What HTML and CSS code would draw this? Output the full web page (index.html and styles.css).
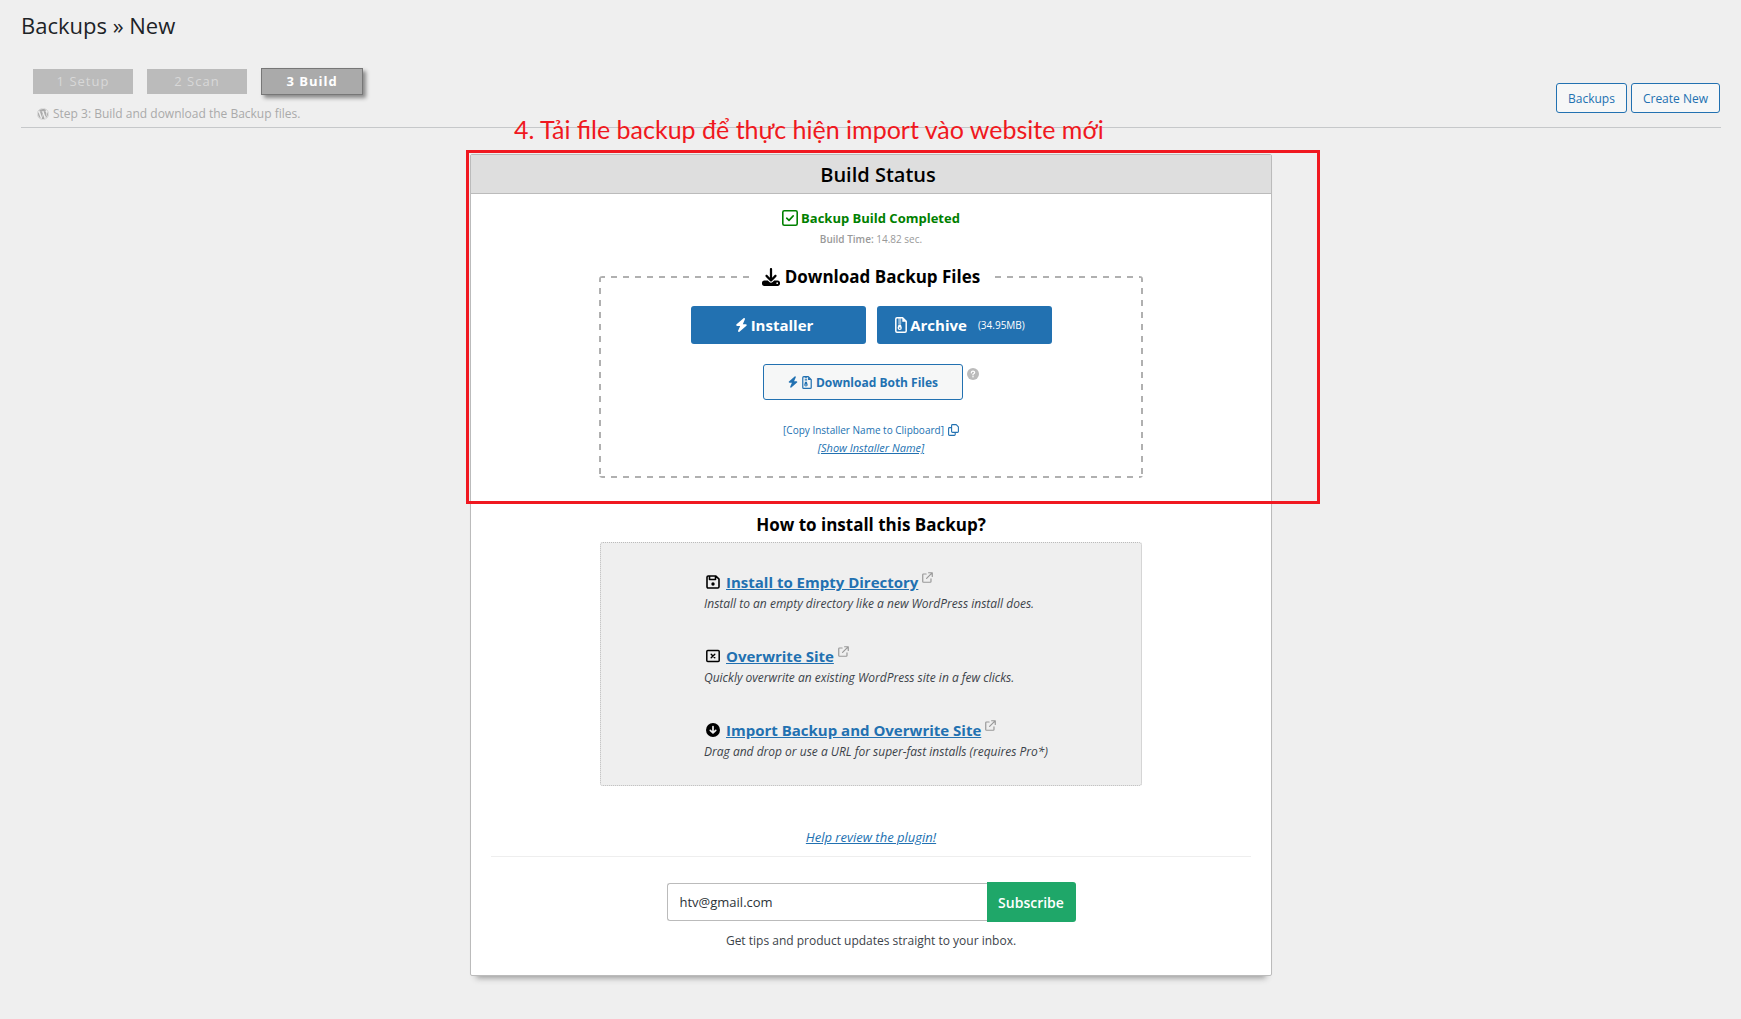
FILE: index.html
```
<!DOCTYPE html>
<html lang="en">
<head>
<meta charset="utf-8">
<meta name="viewport" content="width=device-width, initial-scale=1">
<title>Backups » New</title>
<link rel="stylesheet" href="styles.css">
</head>
<body>
<svg class="sprite" aria-hidden="true">
  <symbol id="bolt" viewBox="0 0 448 512"><path fill="currentColor" d="M349.4 44.6c5.9-13.7 1.5-29.7-10.6-38.5s-28.6-8-39.9 1.8l-256 224c-10 8.8-13.6 22.9-8.9 35.3S50.7 288 64 288H175.5L98.6 467.4c-5.9 13.7-1.5 29.7 10.6 38.5s28.6 8 39.9-1.8l256-224c10-8.8 13.6-22.9 8.9-35.3s-16.6-20.7-30-20.7H272.5L349.4 44.6z"/></symbol>
  <symbol id="zip" viewBox="0 0 12 16"><path fill="none" stroke="currentColor" stroke-width="1.5" stroke-linejoin="round" d="M2 .8h5.6l3.6 3.6V14q0 1.200-1.200 1.200H2Q.8 15.200.8 14V2Q.8.8 2 .8z"/><path fill="currentColor" d="M7.300.8v4h4zM3.200 1.500h3v1h-3zM3.200 3.500h3v1h-3zM3.200 5.500h3v1h-3zM3.500 7.500h2.400l.9 3.300q.2 2.200-2.100 2.200t-2.100-2.200zM4 10.500v1.200h1.400v-1.200z" fill-rule="evenodd"/></symbol>
  <symbol id="external" viewBox="0 0 12 12"><path fill="none" stroke="currentColor" stroke-width="1.300" stroke-linecap="round" stroke-linejoin="round" d="M4.500 2.200H1.700Q.8 2.200.8 3.100v7.200q0 .9.9.9h7.200q.9 0 .9-.9V7.500M7.200.8h4v4M11 1 5 7"/></symbol>
</svg>

<main class="page">
  <h1 class="page-title">Backups » New</h1>

  <header class="toolbar">
    <div class="progress">
      <ol class="steps">
        <li class="step">1 Setup</li>
        <li class="step">2 Scan</li>
        <li class="step step-active" aria-current="step">3 Build</li>
      </ol>
      <p class="step-note">
        <svg class="icon-12" viewBox="0 0 512 512" aria-hidden="true"><path fill="currentColor" d="M61.700 169.400l101.500 278C92.200 413 43.300 340.200 43.300 256c0-30.900 6.600-60.100 18.400-86.600zm337.900 75.900c0-26.300-9.400-44.500-17.500-58.700-10.800-17.500-20.900-32.400-20.900-49.900 0-19.600 14.800-37.800 35.700-37.800.9 0 1.800.1 2.800.2-37.900-34.700-88.300-55.900-143.700-55.900-74.300 0-139.700 38.100-177.800 95.900 5 .2 9.700.3 13.700.3 22.200 0 56.700-2.700 56.700-2.700 11.500-.7 12.800 16.200 1.400 17.500 0 0-11.500 1.300-24.300 2l77.500 230.400L249.800 247l-33.100-90.800c-11.500-.7-22.300-2-22.300-2-11.500-.7-10.100-18.200 1.300-17.500 0 0 35.100 2.700 56 2.700 22.200 0 56.700-2.700 56.700-2.700 11.500-.7 12.800 16.200 1.400 17.500 0 0-11.500 1.300-24.300 2l76.900 228.700 21.200-70.900c9-29.400 16-50.500 16-68.700zm-139.900 29.300l-63.800 185.500c19.100 5.600 39.200 8.700 60.100 8.700 24.800 0 48.500-4.300 70.600-12.100-.6-.9-1.100-1.900-1.500-2.900l-65.400-179.200zm183-120.700c.9 6.800 1.400 14 1.400 21.900 0 21.600-4 45.800-16.200 76.200l-65 187.900C426.200 403 468.700 334.500 468.700 256c0-37-9.400-71.800-26-102.100zM504 256c0 136.800-111.300 248-248 248C119.200 504 8 392.700 8 256 8 119.200 119.200 8 256 8c136.700 0 248 111.200 248 248zm-11.400 0c0-130.500-106.200-236.600-236.600-236.600C125.500 19.400 19.400 125.500 19.400 256S125.600 492.600 256 492.600c130.500 0 236.600-106.100 236.600-236.600z"/></svg>
        Step 3: Build and download the Backup files.
      </p>
    </div>
    <nav class="actions" aria-label="Backup pages">
      <button class="btn-outline" type="button">Backups</button>
      <button class="btn-outline" type="button">Create New</button>
    </nav>
  </header>

  <section class="card">
    <h2 class="card-title">Build Status</h2>

    <p class="status">
      <svg class="icon-16" viewBox="0 0 16 16" aria-hidden="true"><rect x=".8" y=".8" width="14.400" height="14.400" rx="1.500" fill="none" stroke="currentColor" stroke-width="1.600"/><path d="M4.700 8.200 7 10.400l4.200-4.500" fill="none" stroke="currentColor" stroke-width="1.600" stroke-linecap="round" stroke-linejoin="round"/></svg>
      Backup Build Completed
    </p>
    <p class="build-time"><b>Build Time:</b> 14.82 sec.</p>

    <fieldset class="downloads">
      <legend class="downloads-title">
        <svg class="icon-18" viewBox="0 0 512 512" aria-hidden="true"><path fill="currentColor" d="M288 32c0-17.700-14.300-32-32-32s-32 14.300-32 32V274.700l-73.400-73.400c-12.500-12.500-32.800-12.500-45.300 0s-12.500 32.800 0 45.300l128 128c12.500 12.500 32.800 12.500 45.300 0l128-128c12.500-12.500 12.500-32.800 0-45.300s-32.800-12.500-45.300 0L288 274.700V32zM64 352c-35.300 0-64 28.700-64 64v32c0 35.300 28.700 64 64 64H448c35.300 0 64-28.700 64-64V416c0-35.300-28.700-64-64-64H346.500l-45.300 45.300c-25 25-65.500 25-90.500 0L165.500 352H64zm368 56a24 24 0 1 1 0 48 24 24 0 1 1 0-48z"/></svg>
        Download Backup Files
      </legend>
      <div class="download-row">
        <button class="btn-primary" type="button"><svg class="icon-bolt" aria-hidden="true"><use href="#bolt"/></svg>Installer</button>
        <button class="btn-primary" type="button"><svg class="icon-zip" aria-hidden="true"><use href="#zip"/></svg>Archive<small class="size">(34.95MB)</small></button>
      </div>
      <div class="both-row">
        <button class="btn-both" type="button"><svg class="icon-bolt-small" aria-hidden="true"><use href="#bolt"/></svg><svg class="icon-zip-small" aria-hidden="true"><use href="#zip"/></svg>Download Both Files</button>
        <svg class="help" viewBox="0 0 12 12" role="img" aria-label="Help"><circle cx="6" cy="6" r="6" fill="currentColor"/><path d="M4.300 4.800Q4.400 3.200 6 3.200t1.700 1.400Q7.700 5.600 6 6.300v.6" fill="none" stroke="#fff" stroke-width="1.200" stroke-linecap="round"/><circle cx="6" cy="8.800" r=".8" fill="#fff"/></svg>
      </div>
      <a class="copy-link" href="#">[Copy Installer Name to Clipboard]
        <svg class="icon-copy" viewBox="0 0 11 12" aria-hidden="true"><path fill="none" stroke="currentColor" stroke-width="1.100" stroke-linejoin="round" d="M4.500.6h3.700l2.200 2.200v4.700q0 .9-.9.9h-5q-.9 0-.9-.9v-6q0-.9.9-.9zM3.600 3.600H1.500q-.9 0-.9.9v6q0 .9.9.9h4.800q.9 0 .9-.9V8.400"/></svg></a>
      <a class="show-link" href="#">[Show Installer Name]</a>
    </fieldset>

    <h3 class="install-title">How to install this Backup?</h3>
    <ul class="options">
      <li>
        <div class="option-head">
          <svg class="icon-14" viewBox="0 0 14 14" aria-hidden="true"><path fill="none" stroke="currentColor" stroke-width="1.600" stroke-linejoin="round" d="M2.200 1h7.700L13 4.100v7.700q0 1.200-1.200 1.200H2.200Q1 13 1 11.800V2.200Q1 1 2.200 1zM3.500 1.300v3.200h6V1.300"/><circle cx="7" cy="9" r="1.700" fill="currentColor"/></svg>
          <a class="option-link" href="#">Install to Empty Directory</a>
          <svg class="icon-external" aria-hidden="true"><use href="#external"/></svg>
        </div>
        <p class="option-note">Install to an empty directory like a new WordPress install does.</p>
      </li>
      <li>
        <div class="option-head">
          <svg class="icon-14" viewBox="0 0 14 14" aria-hidden="true"><rect x=".8" y="1.500" width="12.400" height="11" rx="1" fill="none" stroke="currentColor" stroke-width="1.500"/><path d="m5.200 5.200 3.600 3.600m0-3.600L5.200 8.800" stroke="currentColor" stroke-width="1.400" stroke-linecap="round"/></svg>
          <a class="option-link" href="#">Overwrite Site</a>
          <svg class="icon-external" aria-hidden="true"><use href="#external"/></svg>
        </div>
        <p class="option-note">Quickly overwrite an existing WordPress site in a few clicks.</p>
      </li>
      <li>
        <div class="option-head">
          <svg class="icon-14" viewBox="0 0 14 14" aria-hidden="true"><circle cx="7" cy="7" r="7" fill="currentColor"/><path d="M7 3.500v6.300M4.300 7.300 7 10l2.700-2.700" fill="none" stroke="#efefef" stroke-width="1.700" stroke-linecap="round" stroke-linejoin="round"/></svg>
          <a class="option-link" href="#">Import Backup and Overwrite Site</a>
          <svg class="icon-external" aria-hidden="true"><use href="#external"/></svg>
        </div>
        <p class="option-note">Drag and drop or use a URL for super-fast installs (requires Pro*)</p>
      </li>
    </ul>

    <a class="review" href="#">Help review the plugin!</a>

    <footer class="newsletter">
      <form class="subscribe">
        <input class="email" type="email" value="htv@gmail.com" aria-label="Email address">
        <button class="btn-subscribe" type="submit">Subscribe</button>
      </form>
      <p class="tips">Get tips and product updates straight to your inbox.</p>
    </footer>

    <div class="callout-box"></div>
    <p class="callout-text" lang="vi">4. Tải file backup để thực hiện import vào website mới</p>
  </section>
</main>
</body>
</html>
```
FILE: styles.css
```
* { box-sizing: border-box; }

body {
  margin: 0;
  background: #efefef;
  color: #3c434a;
  font: 12px/20px "Open Sans", "Noto Sans", sans-serif;
}

h1, h2, h3, p, ol, ul { margin: 0; padding: 0; list-style: none; }
a { color: #2271b1; }
svg { flex: none; }
button, input { font-family: inherit; }
.sprite { position: absolute; width: 0; height: 0; }

.page { padding: 9px 20px 40px 21px; }

.page-title {
  color: #1d2327;
  font-size: 22px;
  font-weight: 400;
  line-height: 32px;
}

/* Step progress and page actions */
.toolbar {
  display: flex;
  justify-content: space-between;
  align-items: flex-end;
  margin-top: 27px;
  padding-left: 12px;
  border-bottom: 1px solid #c6c8ca;
}
.steps { display: flex; align-items: center; gap: 14px; }
.step {
  width: 100px;
  background: #bbb;
  color: #d8d8d8;
  font-size: 13px;
  letter-spacing: 1px;
  line-height: 25px;
  text-align: center;
}
.step-active {
  width: 102px;
  border: 1px solid #777;
  background: #aaa;
  color: #fff;
  font-weight: 700;
  box-shadow: 3px 3px 4px #888;
}
.step-note {
  display: flex;
  align-items: center;
  gap: 4px;
  margin: 9px 0 3px;
  padding-left: 4px;
  color: #aaa;
}
.actions { display: flex; gap: 4px; margin: 0 1px 14px 0; }
.btn-outline {
  height: 30px;
  padding: 0 11px;
  border: 1px solid #2271b1;
  border-radius: 3px;
  background: #f6f7f7;
  color: #2271b1;
  font-size: 12px;
}

/* Build status card */
.card {
  position: relative;
  display: flex;
  flex-direction: column;
  align-items: center;
  width: 802px;
  max-width: 100%;
  margin: 26px auto 0;
  padding-bottom: 24px;
  border: 1px solid #bbb;
  border-radius: 2px;
  background: #fff;
  box-shadow: 0 8px 6px -6px #999;
}
.card-title {
  align-self: stretch;
  padding: 1px 0 0 14px;
  border-bottom: 1px solid #bbb;
  background: #dedede;
  color: #000;
  font-size: 20px;
  font-weight: 600;
  line-height: 37px;
  text-align: center;
}
.status {
  display: flex;
  align-items: center;
  gap: 3px;
  margin-top: 14px;
  color: #008000;
  font-size: 13px;
  font-weight: 700;
}
.build-time { color: #999; font-size: 10px; line-height: 22px; }
.build-time b { font-weight: 600; }

/* Long, widely spaced dashes along each edge, 6px on and 6px off */
.downloads {
  --dash-x: repeating-linear-gradient(90deg, #b0b0b0 0 6px, transparent 6px 12px);
  --dash-y: repeating-linear-gradient(#b0b0b0 0 6px, transparent 6px 12px);
  display: flex;
  flex-direction: column;
  align-items: center;
  width: 544px;
  max-width: 100%;
  margin: 15px 0 0;
  padding: 17px 0 19px;
  border: 2px solid transparent;
  border-radius: 3px;
  background:
    var(--dash-x) top / 100% 2px no-repeat border-box,
    var(--dash-x) bottom / 100% 2px no-repeat border-box,
    var(--dash-y) left / 2px 100% no-repeat border-box,
    var(--dash-y) right / 2px 100% no-repeat border-box;
}
.downloads-title {
  display: flex;
  align-items: center;
  gap: 5px;
  margin: 0 auto;
  padding: 0 11px;
  background: #fff;
  color: #000;
  font-size: 17px;
  font-weight: 700;
  line-height: 24px;
}
.download-row { display: flex; gap: 11px; }
.btn-primary {
  display: flex;
  justify-content: center;
  align-items: center;
  gap: 3px;
  width: 175px;
  height: 38px;
  padding: 0 8px 0 0;
  border: 0;
  border-radius: 3px;
  background: #2271b1;
  color: #fff;
  font-size: 15px;
  font-weight: 700;
}
.size { margin-left: 8px; font-size: 10px; font-weight: 400; }
.both-row { display: flex; gap: 4px; margin-top: 20px; }
.btn-both {
  display: flex;
  justify-content: center;
  align-items: center;
  gap: 4px;
  width: 200px;
  height: 36px;
  padding: 0;
  border: 1px solid #2271b1;
  border-radius: 3px;
  background: #f6f7f7;
  color: #2271b1;
  font-size: 12px;
  font-weight: 700;
}
.help { width: 12px; height: 12px; margin-top: 4px; color: #bbb; }
.copy-link {
  display: flex;
  align-items: center;
  gap: 4px;
  margin-top: 21px;
  font-size: 10px;
  line-height: 18px;
  text-decoration: none;
}
.show-link { font-size: 11px; font-style: italic; line-height: 18px; }

/* Install options */
.install-title {
  margin-top: 35px;
  color: #000;
  font-size: 17px;
  font-weight: 700;
  line-height: 24px;
}
.options {
  display: flex;
  flex-direction: column;
  gap: 30px;
  width: 542px;
  max-width: 100%;
  margin-top: 5px;
  padding: 27px 0 23px 103px;
  border: 1px dotted #bbb;
  border-radius: 3px;
  background: #efefef;
}
.option-head { display: flex; align-items: center; gap: 6px; padding-left: 2px; color: #000; }
.option-link { font-size: 15px; font-weight: 700; line-height: 24px; }
.option-note { font-style: italic; }

.review { margin-top: 41px; font-size: 13px; font-style: italic; }

/* Newsletter */
.newsletter {
  display: flex;
  flex-direction: column;
  align-items: center;
  align-self: stretch;
  margin: 9px 20px 0;
  padding-top: 25px;
  border-top: 1px solid #eee;
}
.subscribe { display: flex; align-items: center; }
.email {
  width: 320px;
  height: 38px;
  padding: 0 12px;
  border: 1px solid #bbb;
  border-right: 0;
  border-radius: 3px 0 0 3px;
  background: #fff;
  color: #2c3338;
  font-size: 13px;
}
.btn-subscribe {
  width: 89px;
  height: 40px;
  padding: 0;
  border: 0;
  border-radius: 0 3px 3px 0;
  background: #1fa769;
  color: #fff;
  font-size: 14px;
  font-weight: 600;
}
.tips { margin-top: 9px; }

/* Tutorial annotation laid over the page */
.callout-box {
  position: absolute;
  inset: -5px -49px auto -5px;
  height: 354px;
  border: 3px solid #f01820;
  pointer-events: none;
}
.callout-text {
  position: absolute;
  top: -42px;
  left: 43px;
  color: #f01820;
  font: 25px/32px Lato, "Noto Sans", sans-serif;
  white-space: nowrap;
}

/* Icon sizes */
.icon-12 { width: 12px; height: 12px; }
.icon-14 { width: 14px; height: 14px; }
.icon-16 { width: 16px; height: 16px; }
.icon-18 { width: 18px; height: 18px; }
.icon-bolt { width: 13px; height: 14px; }
.icon-bolt-small { width: 10px; height: 12px; }
.icon-zip { width: 12px; height: 16px; }
.icon-zip-small { width: 10px; height: 13px; }
.icon-copy { width: 11px; height: 12px; }
.icon-external { width: 11px; height: 11px; margin: 0 0 10px -2px; color: #999; }
```
